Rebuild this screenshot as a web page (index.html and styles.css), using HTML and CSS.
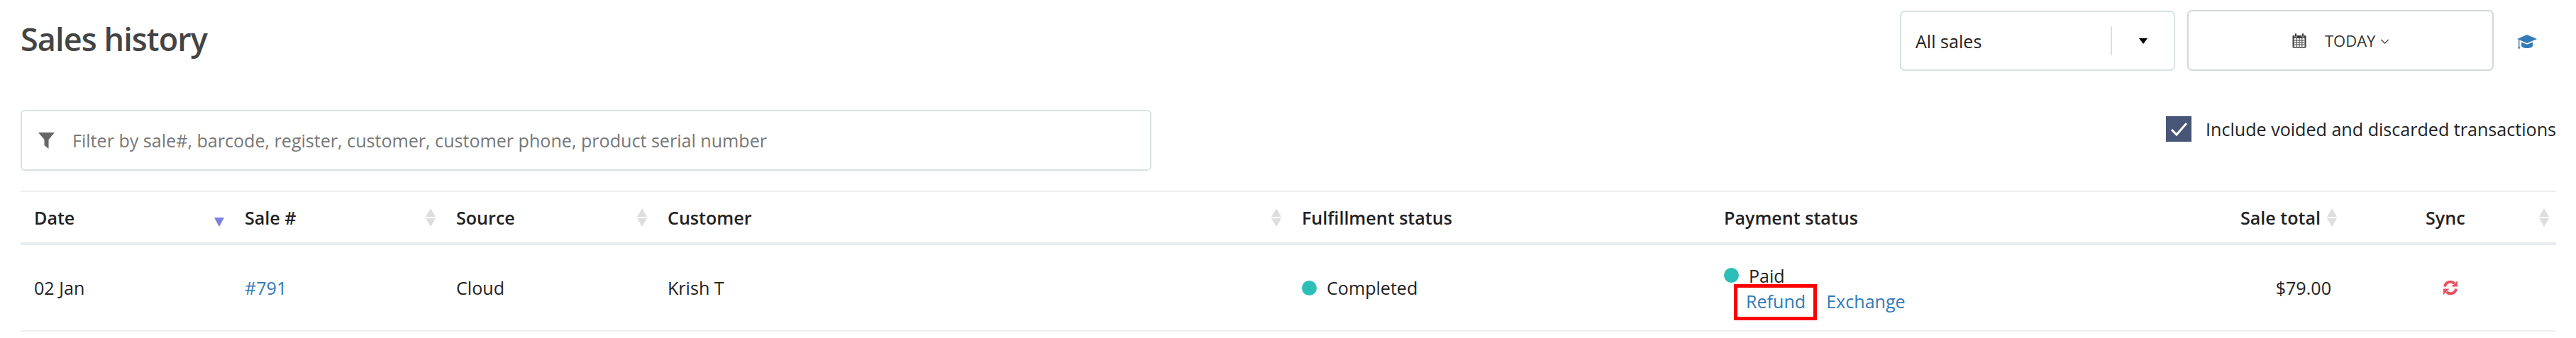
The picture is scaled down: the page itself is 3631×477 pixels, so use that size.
FILE: index.html
```html
<!DOCTYPE html>
<html lang="en">
<head>
<meta charset="utf-8">
<title>Sales history</title>
<link rel="stylesheet" href="styles.css">
</head>
<body>
<main class="page">
  <header class="top">
    <h1 class="title">Sales history</h1>
    <div class="controls">
      <div class="select">
        <span class="select-value">All sales</span>
        <span class="select-arrow"><svg class="caret" viewBox="0 0 12 8"><path d="M0 0h12L6 8z"/></svg></span>
      </div>
      <div class="date-btn">
        <svg class="calendar" viewBox="0 0 20 22">
          <path d="M1.500 4h2v2.500h3V4h7v2.500h3V4h2a1 1 0 0 1 1 1v15.500a1 1 0 0 1-1 1h-17a1 1 0 0 1-1-1V5a1 1 0 0 1 1-1z" fill="#3c3c3c"/>
          <rect x="4" y="1" width="2" height="5" rx="1" fill="#3c3c3c"/><rect x="14" y="1" width="2" height="5" rx="1" fill="#3c3c3c"/>
          <path d="M2.500 8h15v12h-15z" fill="#fff"/>
          <path d="M2.500 11h15M2.500 14h15M2.500 17h15M6.200 8v12M10 8v12M13.800 8v12" stroke="#3c3c3c" stroke-width="1" fill="none"/>
        </svg>
        <span class="date-label">TODAY</span>
        <svg class="chevron" viewBox="0 0 14 8"><path d="M1 1l6 6 6-6" fill="none" stroke="#333" stroke-width="1.400"/></svg>
      </div>
      <svg class="cap" viewBox="0 0 28 20">
        <path d="M14 0L28 6 14 12 0 6z" fill="#337ab7"/>
        <path d="M6 10.500l8 3.200 8-3.200V15c0 2.600-3.600 4-8 4s-8-1.400-8-4z" fill="#337ab7"/>
        <path d="M2 6.500h1.400V16.500l.8 3H1.200l.8-3z" fill="#337ab7"/>
      </svg>
    </div>
  </header>

  <section class="filter-row">
    <div class="filter">
      <svg class="funnel" viewBox="0 0 23 23"><path d="M0 0h23L14.500 10v13L8.500 18V10z"/></svg>
      <span class="placeholder">Filter by sale#, barcode, register, customer, customer phone, product serial number</span>
    </div>
    <label class="check">
      <span class="box"><svg viewBox="0 0 36 36"><path d="M8 19l7 7L29 10" fill="none" stroke="#fff" stroke-width="3"/></svg></span>
      <span>Include voided and discarded transactions</span>
    </label>
  </section>

  <table class="sales">
    <colgroup>
      <col class="c-date"><col class="c-sale"><col class="c-source"><col class="c-customer"><col class="c-fulfil"><col class="c-pay"><col class="c-total"><col class="c-sync">
    </colgroup>
    <thead>
      <tr>
        <th><div class="th"><span>Date</span><svg class="sort" viewBox="0 0 16 26"><path d="M1 13h14l-7 13z" fill="#7b80e0"/></svg></div></th>
        <th><div class="th"><span>Sale #</span><svg class="sort" viewBox="0 0 16 26"><path d="M8 0l7 12H1z" fill="#dedede"/><path d="M1 14h14l-7 12z" fill="#dedede"/></svg></div></th>
        <th><div class="th"><span>Source</span><svg class="sort" viewBox="0 0 16 26"><path d="M8 0l7 12H1z" fill="#dedede"/><path d="M1 14h14l-7 12z" fill="#dedede"/></svg></div></th>
        <th><div class="th"><span>Customer</span><svg class="sort" viewBox="0 0 16 26"><path d="M8 0l7 12H1z" fill="#dedede"/><path d="M1 14h14l-7 12z" fill="#dedede"/></svg></div></th>
        <th><div class="th"><span>Fulfillment status</span></div></th>
        <th><div class="th"><span>Payment status</span></div></th>
        <th class="th-total"><div class="th th-end"><span>Sale total</span><svg class="sort" viewBox="0 0 16 26"><path d="M8 0l7 12H1z" fill="#dedede"/><path d="M1 14h14l-7 12z" fill="#dedede"/></svg></div></th>
        <th class="th-sync"><div class="th"><span>Sync</span><svg class="sort" viewBox="0 0 16 26"><path d="M8 0l7 12H1z" fill="#dedede"/><path d="M1 14h14l-7 12z" fill="#dedede"/></svg></div></th>
      </tr>
    </thead>
    <tbody>
      <tr>
        <td>02 Jan</td>
        <td><a class="link" href="#">#791</a></td>
        <td>Cloud</td>
        <td>Krish T</td>
        <td><span class="status"><i class="dot"></i>Completed</span></td>
        <td class="pay">
          <div class="status paid"><i class="dot"></i>Paid</div>
          <div class="actions"><a class="link refund" href="#">Refund</a><a class="link exchange" href="#">Exchange</a></div>
        </td>
        <td class="num">$79.00</td>
        <td class="sync-cell">
          <svg class="sync" viewBox="0 0 22 22">
            <path d="M3 9.500A8 8 0 0 1 16.500 5" fill="none" stroke="#e8525f" stroke-width="4"/>
            <path d="M21 1v8.500h-8.500z" fill="#e8525f"/>
            <path d="M19 12.500A8 8 0 0 1 5.500 17" fill="none" stroke="#e8525f" stroke-width="4"/>
            <path d="M1 21v-8.500h8.500z" fill="#e8525f"/>
          </svg>
        </td>
      </tr>
    </tbody>
  </table>
</main>
</body>
</html>
```
FILE: styles.css
```css
* { box-sizing: border-box; }
html, body { margin: 0; background: #fff; }
body {
  font-family: "Open Sans", "Noto Sans", sans-serif;
  font-size: 25.1px;
  color: #222;
}
.page { padding: 0 28px 0 29px; height: 477px; overflow: hidden; }

.top { display: flex; justify-content: space-between; align-items: flex-start; padding-top: 14px; height: 100px; }
.title { margin: 9px 0 0; font-size: 45px; font-weight: 600; line-height: 64px; letter-spacing: -0.9px; color: #444; }
.controls { display: flex; align-items: flex-start; margin-right: 27px; }

.select {
  width: 388px; height: 85px; margin-top: 1px;
  border: 2px solid #d7e2e2; border-radius: 7px;
  display: flex; align-items: center; padding-left: 20px;
}
.select-value { flex: 0 0 275px; color: #222; }
.select-arrow { height: 41px; flex: 1; border-left: 2px solid #d7e2e2; display: flex; align-items: center; padding-left: 38px; }
.caret { width: 12px; height: 8px; }

.date-btn {
  width: 432px; height: 86px; margin-left: 17px;
  border: 2px solid #d3d8d8; border-radius: 7px;
  display: flex; align-items: center; padding-left: 146px;
}
.calendar { width: 20px; height: 22px; }
.date-label { margin-left: 26px; font-size: 22px; color: #333; }
.chevron { width: 13px; height: 7px; margin-left: 7px; margin-top: 3px; }
.cap { width: 28px; height: 20px; margin: 35px 0 0 33px; }

.filter-row { display: flex; justify-content: space-between; align-items: flex-start; margin-top: 55px; }
.filter {
  width: 1594px; height: 86px;
  border: 2px solid #d7e2e2; border-radius: 6px;
  display: flex; align-items: center; padding-left: 23px;
}
.funnel { width: 23px; height: 23px; fill: #666; }
.placeholder { margin-left: 25px; color: #777; }

.check { display: flex; align-items: center; margin-top: 9px; color: #222; }
.box { width: 36px; height: 36px; background: #475677; margin-right: 20px; display: block; }
.box svg { display: block; width: 36px; height: 36px; }

.sales { width: 100%; border-collapse: separate; border-spacing: 0; table-layout: fixed; margin-top: 28px; }
.c-date { width: 297px; }
.c-sale { width: 298px; }
.c-source { width: 298px; }
.c-customer { width: 894px; }
.c-fulfil { width: 595px; }
.c-pay { width: 729px; }
.c-total { width: 164px; }
.c-sync { width: 299px; }

.sales th {
  height: 77px; padding: 0 9px 0 19px; text-align: left;
  font-weight: 600; color: #222;
  border-top: 2px solid #eceeef; border-bottom: 4px solid #e6ebef;
}
.sales th.th-total { padding-left: 0; }
.sales th.th-sync { padding-left: 115px; }
.th { display: flex; justify-content: space-between; align-items: center; }
.th-end { justify-content: flex-end; gap: 8px; }
.sort { width: 16px; height: 26px; flex: none; }

.sales td { height: 122px; padding: 0 9px 0 19px; border-bottom: 2px solid #eceeef; color: #222; vertical-align: middle; }
.link { color: #337ab7; text-decoration: none; }

.status { display: flex; align-items: center; }
.dot { width: 21px; height: 21px; border-radius: 50%; background: #2bbfb8; margin-right: 14px; flex: none; }
.paid { line-height: 32px; }
.sales td.pay { padding-top: 12px; }
.actions { display: flex; align-items: flex-start; margin: -4px 0 0 14px; }
.refund { border: 5px solid #f00; padding: 0 11px 0 12px; margin-right: 13px; height: 51px; line-height: 38px; }
.exchange { line-height: 48px; }
.num { text-align: right; }
.sales td.num { padding: 0 18px 0 0; }
.sales td.sync-cell { padding-left: 139px; }
.sync { width: 22px; height: 22px; display: block; }
```
